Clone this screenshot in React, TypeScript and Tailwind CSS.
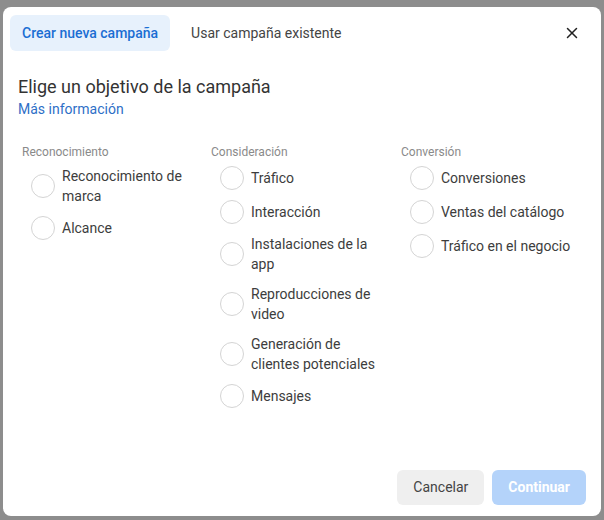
import { X } from 'lucide-react';

type Column = {
  title: string;
  options: string[];
  width: string;
};

const columns: Column[] = [
  {
    title: 'Reconocimiento',
    options: ['Reconocimiento de marca', 'Alcance'],
    width: 'w-[189px]',
  },
  {
    title: 'Consideración',
    options: [
      'Tráfico',
      'Interacción',
      'Instalaciones de la app',
      'Reproducciones de video',
      'Generación de clientes potenciales',
      'Mensajes',
    ],
    width: 'w-[190px]',
  },
  {
    title: 'Conversión',
    options: ['Conversiones', 'Ventas del catálogo', 'Tráfico en el negocio'],
    width: 'w-[190px]',
  },
];

function Radio() {
  return <div className="w-6 h-6 shrink-0 rounded-full border border-[#d4d4d4] bg-white" />;
}

export default function App() {
  return (
    <div
      className="w-[604px] h-[520px] bg-[#8d8d8d] pt-[7px] pl-[3px] overflow-hidden"
      style={{ fontFamily: 'Roboto, "Liberation Sans", sans-serif' }}
    >
      <div className="w-[598px] h-[509px] rounded-lg bg-white flex flex-col">
        {/* Tabs */}
        <div className="flex items-center pt-2 pl-[7px] pr-[20px]">
          <div className="h-9 px-3 flex items-center rounded-md bg-[#e7f1fc] text-[14px] font-medium text-[#1b6ed3]">
            Crear nueva campaña
          </div>
          <div className="h-9 px-3 ml-[9px] flex items-center text-[14px] text-[#444444]">
            Usar campaña existente
          </div>
          <X className="ml-auto w-[18px] h-[18px] text-[#222222]" strokeWidth={2} />
        </div>

        {/* Heading */}
        <div className="px-[15px] mt-6">
          <h1 className="text-[18px] leading-6 text-[#333333]">Elige un objetivo de la campaña</h1>
          <a className="block text-[14px] leading-5 text-[#2e6fc7]">Más información</a>
        </div>

        {/* Objectives */}
        <div className="flex pl-[19px] mt-[25px]">
          {columns.map((col) => (
            <div key={col.title} className={col.width}>
              <div className="text-[12px] leading-4 text-[#8a8a8a]">{col.title}</div>
              <div className="flex flex-col gap-2.5 mt-1.5 pl-[9px]">
                {col.options.map((opt) => (
                  <div key={opt} className="flex items-center gap-[7px]">
                    <Radio />
                    <span className="w-[134px] text-[14px] leading-5 text-[#3d3d3d]">{opt}</span>
                  </div>
                ))}
              </div>
            </div>
          ))}
        </div>

        {/* Footer */}
        <div className="mt-auto flex justify-end gap-2 pr-[15px] pb-[11px]">
          <button className="h-[35px] px-4 rounded-md bg-[#efefef] text-[14px] text-[#444444]">
            Cancelar
          </button>
          <button className="h-[35px] px-4 rounded-md bg-[#b4d3fa] text-[14px] font-bold text-white">
            Continuar
          </button>
        </div>
      </div>
    </div>
  );
}
